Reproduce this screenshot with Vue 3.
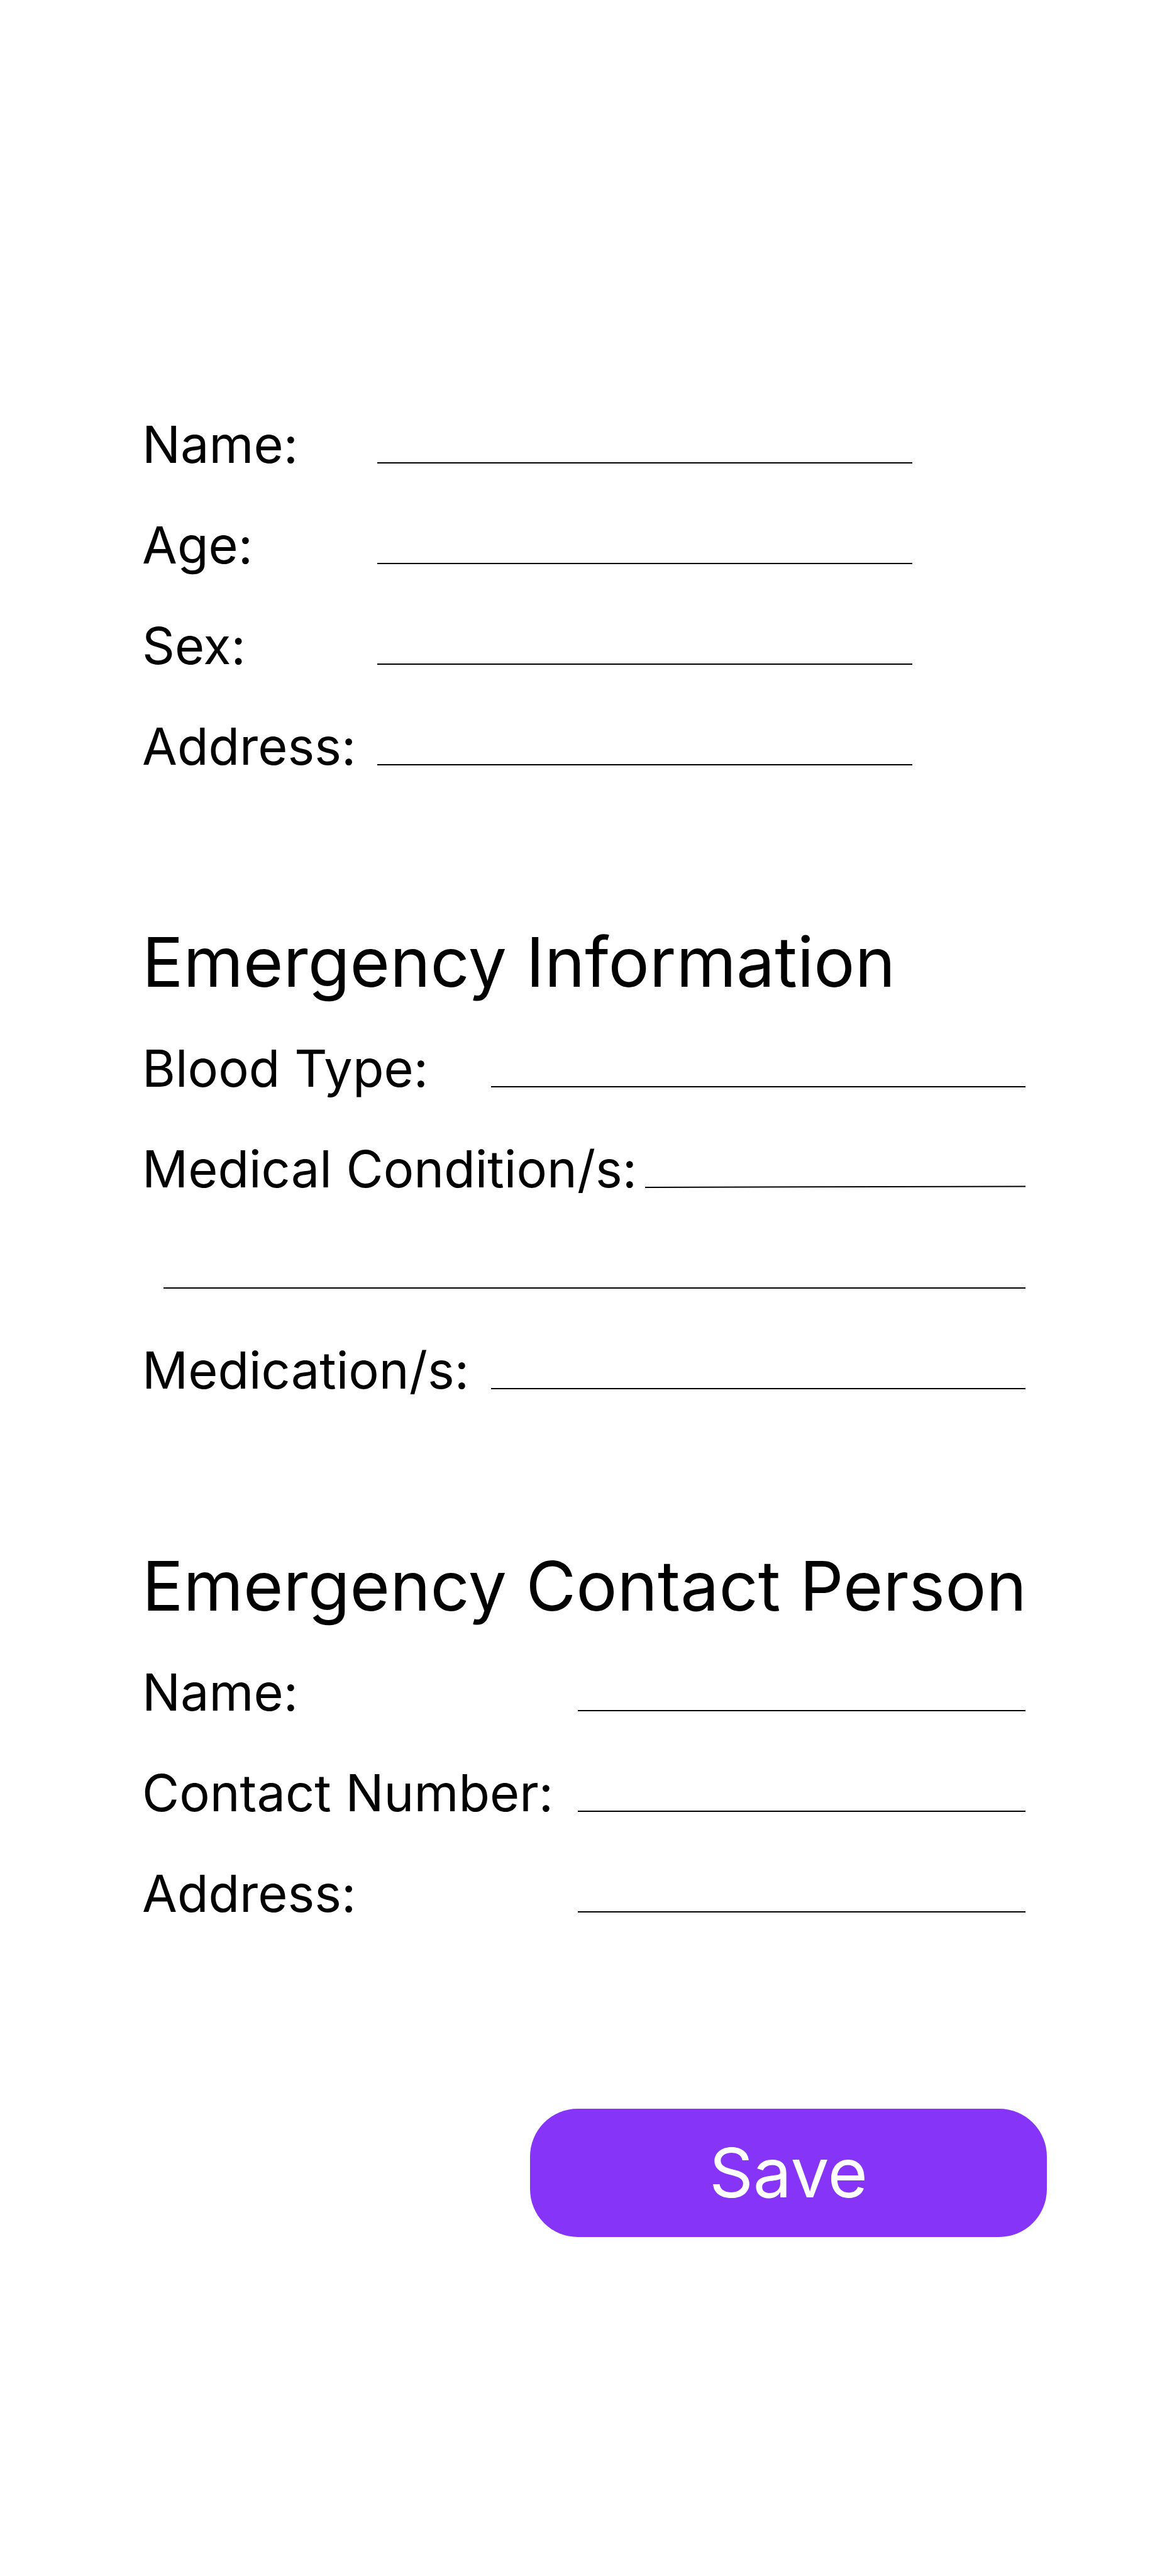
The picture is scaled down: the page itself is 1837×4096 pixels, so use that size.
<script setup>
import { reactive } from 'vue'

const sections = [
  {
    key: 'personal',
    title: '',
    fields: [
      { id: 'name', label: 'Name:' },
      { id: 'age', label: 'Age:' },
      { id: 'sex', label: 'Sex:' },
      { id: 'address', label: 'Address:' },
    ],
  },
  {
    key: 'medical',
    title: 'Emergency Information',
    fields: [
      { id: 'blood-type', label: 'Blood Type:' },
      { id: 'conditions', label: 'Medical Condition/s:', kind: 'long' },
      { id: 'conditions-more', label: '', kind: 'continued' },
      { id: 'medications', label: 'Medication/s:' },
    ],
  },
  {
    key: 'contact',
    title: 'Emergency Contact Person',
    fields: [
      { id: 'contact-name', label: 'Name:' },
      { id: 'contact-number', label: 'Contact Number:' },
      { id: 'contact-address', label: 'Address:' },
    ],
  },
]

const values = reactive({})
</script>

<template>
  <form class="form" @submit.prevent>
    <section v-for="section in sections" :key="section.key" class="section" :class="section.key">
      <h2 v-if="section.title" class="title">{{ section.title }}</h2>
      <div v-for="field in section.fields" :key="field.id" class="row" :class="field.kind">
        <label v-if="field.label" class="label" :for="field.id">{{ field.label }}</label>
        <input
          :id="field.id"
          v-model="values[field.id]"
          class="line"
          type="text"
          :aria-label="field.label ? null : 'Medical conditions, continued'"
        />
      </div>
    </section>
    <div class="actions">
      <button class="save" type="submit">Save</button>
    </div>
  </form>
</template>

<style>
body {
  margin: 0;
  background: #fff;
}
</style>

<style scoped>
.form {
  box-sizing: border-box;
  padding: 627px 206px 539px 226px;
  color: #000;
  font-family: Inter, "Liberation Sans", sans-serif;
  font-size: 81px;
  font-optical-sizing: none;
}
.section + .section {
  margin-top: 182px;
}
.title {
  margin: 0 0 10px;
  font-size: 109px;
  font-weight: 400;
  line-height: 160px;
  white-space: nowrap;
}
.row {
  display: grid;
  grid-template-columns: var(--label) minmax(0, 1fr);
  align-items: start;
  height: 160px;
}
.label {
  line-height: 160px;
  white-space: nowrap;
}
.line {
  box-sizing: border-box;
  width: 100%;
  height: 110px;
  padding: 0;
  border: 0;
  border-bottom: 2px solid #000;
  border-radius: 0;
  outline: 0;
  background: none;
  color: inherit;
  font: inherit;
}
.personal {
  --label: 374px;
  padding-right: 180px;
}
.medical {
  --label: 555px;
}
.contact {
  --label: 693px;
}
.long {
  --label: 800px;
}
.long .line {
  transform: rotate(-0.15deg);
  transform-origin: left bottom;
}
.continued {
  --label: 34px;
}
.continued .line {
  grid-column: 2;
}
.actions {
  display: flex;
  justify-content: flex-end;
  margin: 262px -34px 0 0;
}
.save {
  width: 822px;
  height: 204px;
  padding: 0 0 2px;
  border: 0;
  border-radius: 76px;
  background: #8734f9;
  color: #fff;
  font: inherit;
  font-size: 109px;
  cursor: pointer;
}
</style>
